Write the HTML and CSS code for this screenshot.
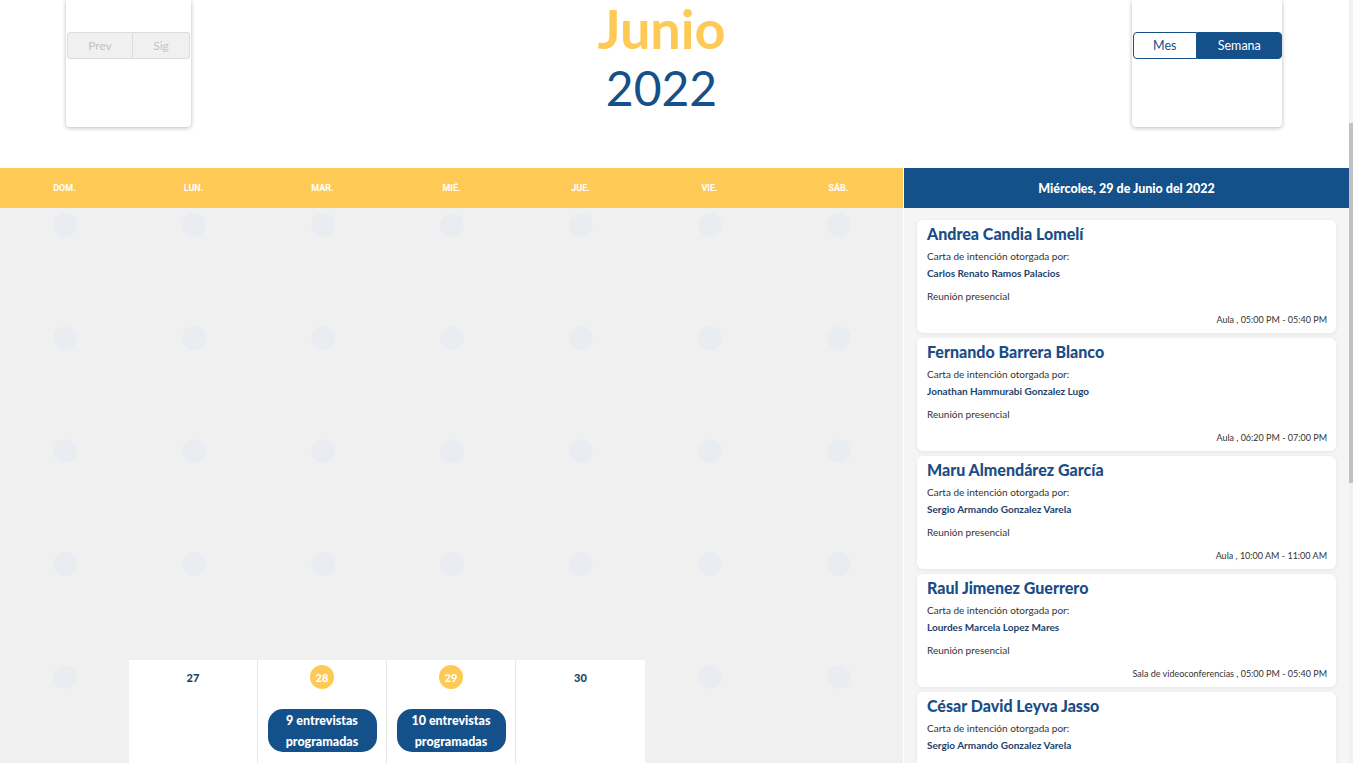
FILE: index.html
```html
<!DOCTYPE html>
<html lang="es">
<head>
<meta charset="utf-8">
<title>Calendario Junio 2022</title>
<link rel="stylesheet" href="styles.css">
</head>
<body>
<div class="page">
  <header class="top">
    <div class="ctl-box">
      <div class="btn-group">
        <button class="btn-nav prev">Prev</button>
        <button class="btn-nav sig">Sig</button>
      </div>
    </div>
    <div class="title">
      <div class="month">Junio</div>
      <div class="year">2022</div>
    </div>
    <div class="ctl-box wide">
      <div class="btn-group">
        <button class="btn-view mes">Mes</button>
        <button class="btn-view semana active">Semana</button>
      </div>
    </div>
  </header>

  <main class="main">
    <section class="calendar">
      <div class="cal-head">
        <div>Dom.</div><div>Lun.</div><div>Mar.</div><div>Mié.</div><div>Jue.</div><div>Vie.</div><div>Sáb.</div>
      </div>
      <div class="cal-body">
        <div class="cell"><span class="dot"></span></div><div class="cell"><span class="dot"></span></div><div class="cell"><span class="dot"></span></div><div class="cell"><span class="dot"></span></div><div class="cell"><span class="dot"></span></div><div class="cell"><span class="dot"></span></div><div class="cell"><span class="dot"></span></div>
        <div class="cell"><span class="dot"></span></div><div class="cell"><span class="dot"></span></div><div class="cell"><span class="dot"></span></div><div class="cell"><span class="dot"></span></div><div class="cell"><span class="dot"></span></div><div class="cell"><span class="dot"></span></div><div class="cell"><span class="dot"></span></div>
        <div class="cell"><span class="dot"></span></div><div class="cell"><span class="dot"></span></div><div class="cell"><span class="dot"></span></div><div class="cell"><span class="dot"></span></div><div class="cell"><span class="dot"></span></div><div class="cell"><span class="dot"></span></div><div class="cell"><span class="dot"></span></div>
        <div class="cell"><span class="dot"></span></div><div class="cell"><span class="dot"></span></div><div class="cell"><span class="dot"></span></div><div class="cell"><span class="dot"></span></div><div class="cell"><span class="dot"></span></div><div class="cell"><span class="dot"></span></div><div class="cell"><span class="dot"></span></div>
        <div class="cell"><span class="dot"></span></div>
        <div class="cell day"><span class="num">27</span></div>
        <div class="cell day"><span class="num hl">28</span><span class="pill">9 entrevistas<br>programadas</span></div>
        <div class="cell day"><span class="num hl">29</span><span class="pill">10 entrevistas<br>programadas</span></div>
        <div class="cell day last"><span class="num">30</span></div>
        <div class="cell"><span class="dot"></span></div>
        <div class="cell"><span class="dot"></span></div>
      </div>
    </section>

    <aside class="panel">
      <div class="panel-head">Miércoles, 29 de Junio del 2022</div>
      <div class="panel-body">
        <article class="card">
          <h3 class="c-name">Andrea Candia Lomelí</h3>
          <p class="c-label">Carta de intención otorgada por:</p>
          <p class="c-by">Carlos Renato Ramos Palacios</p>
          <p class="c-type">Reunión presencial</p>
          <p class="c-time">Aula , 05:00 PM - 05:40 PM</p>
        </article>
        <article class="card">
          <h3 class="c-name">Fernando Barrera Blanco</h3>
          <p class="c-label">Carta de intención otorgada por:</p>
          <p class="c-by">Jonathan Hammurabi Gonzalez Lugo</p>
          <p class="c-type">Reunión presencial</p>
          <p class="c-time">Aula , 06:20 PM - 07:00 PM</p>
        </article>
        <article class="card">
          <h3 class="c-name">Maru Almendárez García</h3>
          <p class="c-label">Carta de intención otorgada por:</p>
          <p class="c-by">Sergio Armando Gonzalez Varela</p>
          <p class="c-type">Reunión presencial</p>
          <p class="c-time">Aula , 10:00 AM - 11:00 AM</p>
        </article>
        <article class="card">
          <h3 class="c-name">Raul Jimenez Guerrero</h3>
          <p class="c-label">Carta de intención otorgada por:</p>
          <p class="c-by">Lourdes Marcela Lopez Mares</p>
          <p class="c-type">Reunión presencial</p>
          <p class="c-time">Sala de videoconferencias , 05:00 PM - 05:40 PM</p>
        </article>
        <article class="card">
          <h3 class="c-name">César David Leyva Jasso</h3>
          <p class="c-label">Carta de intención otorgada por:</p>
          <p class="c-by">Sergio Armando Gonzalez Varela</p>
        </article>
      </div>
    </aside>
  </main>
</div>
<div class="scrollbar"><div class="thumb"></div></div>
</body>
</html>
```

FILE: styles.css
```css
html, body {
  margin: 0;
  padding: 0;
  height: 763px;
  overflow: hidden;
  background: #ffffff;
}
body {
  font-family: "Lato", "Noto Sans", sans-serif;
  color: #333333;
}
.page {
  width: 1349px;
}
.top {
  height: 168px;
  display: flex;
  justify-content: space-between;
  align-items: flex-start;
  padding: 0 67px 0 66px;
  box-sizing: border-box;
}
.ctl-box {
  width: 125px;
  height: 127px;
  background: #fff;
  border-radius: 0 0 4px 4px;
  box-shadow: 0 1px 4px rgba(0, 0, 0, 0.28);
  padding-top: 32px;
  box-sizing: border-box;
}
.ctl-box.wide {
  width: 150px;
}
.btn-group {
  display: flex;
  padding: 0 1px;
}
.btn-nav {
  height: 27px;
  font-family: "Lato", sans-serif;
  font-size: 12px;
  color: #c4c4c4;
  background: #f0f0f0;
  border: 1px solid #dcdcdc;
  padding: 0;
  margin: 0;
}
.btn-nav.prev {
  width: 66px;
  border-radius: 3px 0 0 3px;
}
.btn-nav.sig {
  width: 57px;
  border-left: none;
  border-radius: 0 3px 3px 0;
}
.ctl-box.wide .btn-group {
  padding: 0 0 0 1px;
}
.btn-view {
  height: 27px;
  font-family: "Lato", sans-serif;
  font-size: 12.5px;
  padding: 0;
  margin: 0;
  border: 1px solid #14508a;
}
.btn-view.mes {
  width: 64px;
  background: #fff;
  color: #14508a;
  border-radius: 4px 0 0 4px;
}
.btn-view.semana {
  width: 86px;
  background: #14508a;
  color: #fff;
  border-radius: 0 4px 4px 0;
}
.title {
  text-align: center;
  padding-top: 1px;
}
.month {
  font-size: 54px;
  font-weight: 700;
  color: #fec955;
  line-height: 56px;
}
.year {
  font-size: 48px;
  font-weight: 400;
  color: #14508a;
  line-height: 60px;
  margin-top: 1px;
}

.main {
  display: flex;
  gap: 1px;
  align-items: flex-start;
}
.calendar {
  width: 903px;
}
.cal-head {
  height: 40px;
  background: #fec955;
  display: grid;
  grid-template-columns: repeat(7, 129px);
  align-items: center;
  text-align: center;
  font-family: "Roboto", sans-serif;
  font-size: 9px;
  font-weight: 700;
  color: #fff;
  text-transform: uppercase;
}
.cal-body {
  background: #f0f0f0;
  display: grid;
  grid-template-columns: repeat(7, 129px);
  grid-auto-rows: 113px;
}
.cell {
  display: flex;
  flex-direction: column;
  align-items: center;
  padding-top: 5px;
  box-sizing: border-box;
}
.dot {
  width: 24px;
  height: 24px;
  border-radius: 50%;
  background: #e9edf1;
}
.cell.day {
  background: #fff;
  border-right: 1px solid #e6e6e6;
  padding-top: 5px;
}
.cell.day.last {
  border-right: none;
}
.num {
  width: 24px;
  height: 24px;
  border-radius: 50%;
  display: flex;
  align-items: center;
  justify-content: center;
  font-size: 11px;
  font-weight: 900;
  color: #1d3f6b;
}
.num.hl {
  background: #fec955;
  color: #fff;
}
.pill {
  margin-top: 20px;
  width: 109px;
  height: 43px;
  box-sizing: border-box;
  border-radius: 15px;
  background: #14508a;
  color: #fff;
  font-size: 12.5px;
  font-weight: 900;
  line-height: 21px;
  text-align: center;
  padding-top: 1px;
}

.panel {
  width: 445px;
  height: 595px;
  background: #f5f5f5;
  overflow: hidden;
}
.panel-head {
  height: 40px;
  background: #14508a;
  color: #fff;
  font-size: 12.5px;
  font-weight: 900;
  display: flex;
  align-items: center;
  justify-content: center;
}
.panel-body {
  padding: 12px 13px;
  display: flex;
  flex-direction: column;
  gap: 5px;
}
.card {
  background: #fff;
  border-radius: 6px;
  box-shadow: 0 1px 4px rgba(0, 0, 0, 0.07);
  padding: 4px 9px 7px 10px;
  height: 113px;
  box-sizing: border-box;
  flex-shrink: 0;
}
.card p, .card h3 {
  margin: 0;
}
.c-name {
  font-size: 16px;
  font-weight: 900;
  color: #1b4d85;
  line-height: 20px;
}
.c-label {
  font-size: 10px;
  line-height: 12px;
  margin-top: 6px !important;
  color: #333;
}
.c-by {
  font-size: 10px;
  line-height: 12px;
  font-weight: 700;
  color: #1d3f6b;
  margin-top: 5px !important;
}
.c-type {
  font-size: 10px;
  line-height: 12px;
  margin-top: 11px !important;
  color: #333;
}
.c-time {
  font-size: 9px;
  line-height: 12px;
  margin-top: 12px !important;
  text-align: right;
  color: #333;
}
.scrollbar {
  position: fixed;
  top: 0;
  right: 0;
  width: 4px;
  height: 763px;
  background: #f1f1f1;
}
.thumb {
  position: absolute;
  top: 123px;
  left: 0;
  width: 4px;
  height: 360px;
  background: #c1c1c1;
}
```
